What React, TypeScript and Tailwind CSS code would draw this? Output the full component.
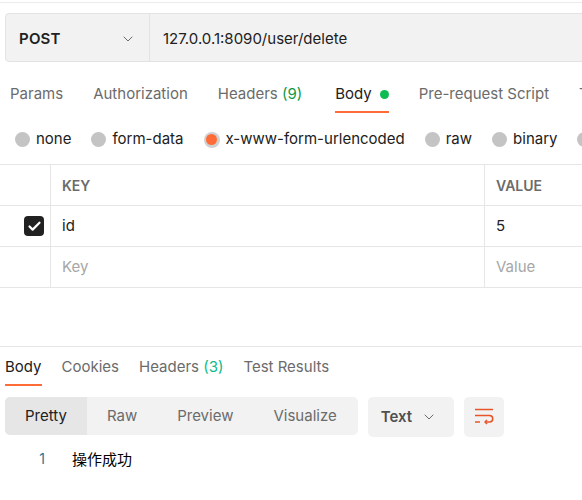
import { ChevronDown, Check } from "lucide-react";

const font = "font-['Inter','Noto_Sans',sans-serif]";

function Radio({ selected }: { selected?: boolean }) {
  if (selected) {
    return (
      <span className="flex h-[16px] w-[16px] items-center justify-center rounded-full bg-[#d0d0d0]">
        <span className="h-[11px] w-[11px] rounded-full bg-[#ff6c37]" />
      </span>
    );
  }
  return <span className="h-[15px] w-[15px] rounded-full bg-[#c4c4c4]" />;
}

function WrapIcon() {
  return (
    <svg width="20" height="20" viewBox="0 0 20 20" fill="none" stroke="#e8542a" strokeWidth="1.5">
      <path d="M1 2.5H19" />
      <path d="M1 8.5H15.5a3.25 3.25 0 0 1 0 6.5H11" />
      <path d="M13 13L11 15l2 2" strokeLinejoin="round" />
      <path d="M1 15H6" />
    </svg>
  );
}

export default function App() {
  const bodyTypes = [
    { label: "none" },
    { label: "form-data" },
    { label: "x-www-form-urlencoded", selected: true },
    { label: "raw" },
    { label: "binary" },
    { label: "GraphQL" },
  ];

  return (
    <div className={`h-[500px] w-[582px] overflow-hidden bg-white text-[15px] text-[#212121] ${font}`}>
      <div className="mt-[2px] h-px bg-[#ebebeb]" />

      {/* request bar */}
      <div className="mt-[10px] ml-[5px] flex h-[49px] w-[620px] rounded-l-[4px] border border-[#e3e3e3] bg-[#f2f2f2]">
        <div className="flex w-[144px] items-center justify-between border-r border-[#e3e3e3] pt-[3px] pl-[13px] pr-[13px]">
          <span className="font-semibold tracking-[0.2px]">POST</span>
          <ChevronDown size={16} strokeWidth={1.5} className="text-[#6b6b6b]" />
        </div>
        <div className="flex items-center pt-[3px] pl-[13px]">127.0.0.1:8090/user/delete</div>
      </div>

      {/* request tabs */}
      <div className="flex gap-[30px] whitespace-nowrap pl-[10px] text-[#6b6b6b]">
        <span className="pt-[22px] pb-[9px] leading-[20px]">Params</span>
        <span className="pt-[22px] pb-[9px] leading-[20px]">Authorization</span>
        <span className="pt-[22px] pb-[9px] leading-[20px]">
          Headers <span className="text-[#0a9a46]">(9)</span>
        </span>
        <span className="ml-[3px] flex items-center gap-[8px] border-b-2 border-[#ff6c37] pt-[22px] pb-[7px] leading-[20px] text-[#212121]">
          Body
          <span className="h-[9px] w-[9px] rounded-full bg-[#0cbb52]" />
        </span>
        <span className="pt-[22px] pb-[9px] leading-[20px]">Pre-request Script</span>
        <span className="pt-[22px] pb-[9px] leading-[20px]">Tests</span>
      </div>

      {/* body types */}
      <div className="flex h-[51px] items-center gap-5 whitespace-nowrap pt-[2px] pl-[15px]">
        {bodyTypes.map((t) => (
          <div key={t.label} className="flex items-center gap-[6px]">
            <Radio selected={t.selected} />
            <span>{t.label}</span>
          </div>
        ))}
      </div>

      {/* key / value table */}
      <div className="border-t border-[#e6e6e6]">
        <div className="flex h-[41px] border-b border-[#e6e6e6]">
          <div className="w-[51px] border-r border-[#e6e6e6]" />
          <div className="flex w-[434px] items-center border-r border-[#e6e6e6] pl-[11px] text-[14px] font-semibold text-[#6b6b6b]">
            KEY
          </div>
          <div className="flex items-center pl-[11px] text-[14px] font-semibold text-[#6b6b6b]">VALUE</div>
        </div>
        <div className="flex h-[41px] border-b border-[#e6e6e6]">
          <div className="flex w-[51px] items-center justify-end border-r border-[#e6e6e6] pr-[6px]">
            <span className="flex h-[20px] w-[20px] items-center justify-center rounded-[4px] bg-[#212121]">
              <Check size={15} strokeWidth={3.5} className="text-white" />
            </span>
          </div>
          <div className="flex w-[434px] items-center border-r border-[#e6e6e6] pl-[11px]">id</div>
          <div className="flex items-center pl-[11px]">5</div>
        </div>
        <div className="flex h-[41px] border-b border-[#e6e6e6]">
          <div className="w-[51px] border-r border-[#e6e6e6]" />
          <div className="flex w-[434px] items-center border-r border-[#e6e6e6] pl-[11px] text-[#a6a6a6]">Key</div>
          <div className="flex items-center pl-[11px] text-[#a6a6a6]">Value</div>
        </div>
      </div>

      {/* response */}
      <div className="mt-[58px] border-t border-[#e6e6e6]">
        <div className="flex gap-[20px] whitespace-nowrap pl-[5px] text-[#6b6b6b]">
          <span className="border-b-2 border-[#ff6c37] pt-[10px] pb-[7px] leading-[20px] text-[#212121]">Body</span>
          <span className="pt-[10px] pb-[9px] leading-[20px]">Cookies</span>
          <span className="pt-[10px] pb-[9px] leading-[20px]">
            Headers <span className="text-[#0cbb8a]">(3)</span>
          </span>
          <span className="pt-[10px] pb-[9px] leading-[20px]">Test Results</span>
        </div>

        <div className="mt-[11px] flex items-start gap-[10px] pl-[5px]">
          <div className="flex h-[38px] overflow-hidden rounded-[5px] bg-[#f2f2f2] text-[#6b6b6b]">
            <span className="flex items-center bg-[#e6e6e6] px-5 text-[#212121]">Pretty</span>
            <span className="flex items-center px-5">Raw</span>
            <span className="flex items-center px-5">Preview</span>
            <span className="flex items-center pl-5 pr-[21px]">Visualize</span>
          </div>
          <div className="flex h-[40px] w-[86px] items-center justify-between rounded-[5px] bg-[#f2f2f2] pl-[13px] pr-[17px] font-semibold text-[#505050]">
            Text
            <ChevronDown size={16} strokeWidth={1.5} className="text-[#6b6b6b]" />
          </div>
          <div className="flex h-[40px] w-[40px] items-center justify-center rounded-[5px] bg-[#f2f2f2]">
            <WrapIcon />
          </div>
        </div>

        <div className="mt-[12px] flex leading-[20px]">
          <span className="w-[45px] text-right text-[14px] text-[#237893]">1</span>
          <span className="pl-[27px] font-['Noto_Sans_CJK_SC',sans-serif] text-[15px] text-black">操作成功</span>
        </div>
      </div>
    </div>
  );
}
